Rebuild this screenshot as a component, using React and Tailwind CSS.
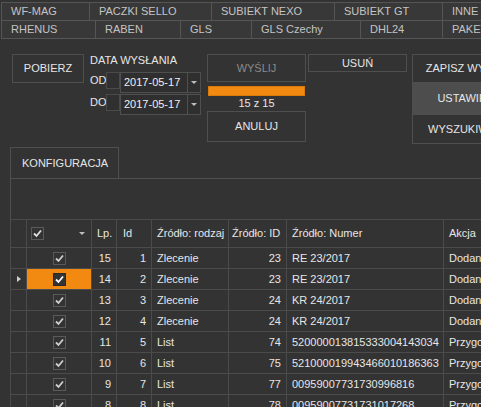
import React from "react";

const Check = ({ color = "#d0d0d0" }) => (
  <svg width="11" height="11" viewBox="0 0 11 11" className="block">
    <polyline points="2,5.5 4.5,8 9,2.5" fill="none" stroke={color} strokeWidth="1.8" />
  </svg>
);

const Box = ({ selected }) => (
  <div
    className={
      "w-[13px] h-[13px] border flex items-center justify-center " +
      (selected ? "border-[#2a2a2a] bg-[#333333]" : "border-[#5a5a5a] bg-transparent")
    }
  >
    <Check color={selected ? "#ffffff" : "#cfcfcf"} />
  </div>
);

const rows = [
  [15, 1, "Zlecenie", 23, "RE 23/2017", "Dodano"],
  [14, 2, "Zlecenie", 23, "RE 23/2017", "Dodano"],
  [13, 3, "Zlecenie", 24, "KR 24/2017", "Dodano"],
  [12, 4, "Zlecenie", 24, "KR 24/2017", "Dodano"],
  [11, 5, "List", 74, "520000013815333004143034", "Przygotowano"],
  [10, 6, "List", 75, "521000019943466010186363", "Przygotowano"],
  [9, 7, "List", 77, "00959007731730996816", "Przygotowano"],
  [8, 8, "List", 78, "00959007731731017268", "Przygotowano"],
];

const cols = "grid grid-cols-[16px_65px_25px_35px_77px_58px_157px_120px]";
const cell = "border-r border-b border-[#4b4b4b] overflow-hidden whitespace-nowrap flex items-center";

const Tab = ({ w, children, last }) => (
  <div
    className={
      "h-full flex items-center pl-[9px] whitespace-nowrap overflow-hidden text-[#c4c4c4] " +
      (last ? "" : "border-r border-[#555555]")
    }
    style={{ width: w, flex: "none" }}
  >
    {children}
  </div>
);

const Btn = ({ className = "", color = "text-[#e6e6e6]", children }) => (
  <div
    className={
      "border border-[#4f4f4f] flex items-center justify-center whitespace-nowrap overflow-hidden " +
      color +
      " " +
      className
    }
  >
    {children}
  </div>
);

const DateField = () => (
  <div className="w-[81px] h-[21px] border border-[#4f4f4f] bg-[#2f2f2f] flex items-center">
    <div className="flex-1 pl-[3px] text-[#f0f0f0]">2017-05-17</div>
    <div className="w-[13px] h-full border-l border-[#4f4f4f] flex items-center justify-center">
      <div className="w-0 h-0 border-l-[3px] border-r-[3px] border-t-[3px] border-l-transparent border-r-transparent border-t-[#bdbdbd]" />
    </div>
  </div>
);

export default function App() {
  return (
    <div
      className="w-[481px] h-[407px] overflow-hidden bg-[#333333] text-[11px] leading-[13px] text-[#e6e6e6]"
      style={{ fontFamily: '"Liberation Sans", Arial, sans-serif' }}
    >
      {/* top tabs */}
      <div className="pt-[2px] pl-[1px]">
        <div className="w-[600px] border-t border-l border-[#555555] bg-[#383838]">
          <div className="flex h-[18px] border-b border-[#555555]">
            <Tab w={88}>WF-MAG</Tab>
            <Tab w={122}>PACZKI SELLO</Tab>
            <Tab w={123}>SUBIEKT NEXO</Tab>
            <Tab w={108}>SUBIEKT GT</Tab>
            <Tab w={120} last>INNE ZEWNĘTRZNE</Tab>
          </div>
          <div className="flex h-[18px] border-b border-[#555555]">
            <Tab w={94}>RHENUS</Tab>
            <Tab w={85}>RABEN</Tab>
            <Tab w={71}>GLS</Tab>
            <Tab w={109}>GLS Czechy</Tab>
            <Tab w={82}>DHL24</Tab>
            <Tab w={120} last>PAKETTI</Tab>
          </div>
        </div>
      </div>

      {/* toolbar */}
      <div className="flex items-start mt-[15px] w-[600px]">
        <Btn className="ml-[12px] w-[72px] h-[29px]">POBIERZ</Btn>

        <div className="ml-[6px] w-[111px] flex flex-col -mt-[1px]">
          <div className="h-[14px] flex items-center">DATA WYSŁANIA</div>
          <div className="mt-[5px] flex items-start">
            <div className="w-[16px] h-[17px] flex items-center">OD</div>
            <div className="w-[14px] h-[17px] border border-[#4a4a4a] bg-[#303030]" />
            <DateField />
          </div>
          <div className="mt-[1px] flex items-start">
            <div className="w-[16px] h-[17px] flex items-center">DO</div>
            <div className="w-[14px] h-[17px] border border-[#4a4a4a] bg-[#303030]" />
            <DateField />
          </div>
        </div>

        <div className="ml-[6px] w-[99px] flex flex-col">
          <Btn className="h-[28px]" color="text-[#8a8a8a]">WYŚLIJ</Btn>
          <div className="mt-[4px] mx-[1px] h-[10px] bg-[#f28a12] border border-[#d97a0a]" />
          <div className="h-[15px] flex items-center justify-center">15 z 15</div>
          <Btn className="h-[31px]">ANULUJ</Btn>
        </div>

        <Btn className="ml-[2px] w-[99px] h-[18px]">USUŃ</Btn>

        <div className="ml-[5px] w-[118px] flex flex-col">
          <Btn className="h-[29px]">ZAPISZ WYSYŁKI</Btn>
          <div className="h-[31px] bg-[#4d4d4d] flex items-center justify-center whitespace-nowrap">USTAWIENIA</div>
          <Btn className="h-[30px]">WYSZUKIWANIE</Btn>
        </div>
      </div>

      {/* konfiguracja tab */}
      <div className="mt-[3px] pl-[10px]">
        <div className="flex">
          <div className="w-[109px] h-[31px] border-t border-l border-r border-[#4f4f4f] flex items-center pl-[11px]">
            KONFIGURACJA
          </div>
        </div>
        <div className="border-t border-l border-[#4f4f4f] h-[41px]" />

        {/* grid */}
        <div className="border-l border-[#4b4b4b] w-[560px]">
          <div className={cols + " h-[29px] border-t border-[#4b4b4b]"}>
            <div className={cell} />
            <div className={cell + " justify-between pl-[4px] pr-[6px]"}>
              <div className="w-[13px] h-[13px] border border-[#5a5a5a] flex items-center justify-center">
                <Check color="#e0e0e0" />
              </div>
              <div className="w-0 h-0 border-l-[3px] border-r-[3px] border-t-[3px] border-l-transparent border-r-transparent border-t-[#bdbdbd]" />
            </div>
            <div className={cell + " pl-[5px]"}>Lp.</div>
            <div className={cell + " pl-[6px]"}>Id</div>
            <div className={cell + " pl-[5px]"}>Źródło: rodzaj</div>
            <div className={cell + " pl-[3px]"}>Źródło: ID</div>
            <div className={cell + " pl-[5px]"}>Źródło: Numer</div>
            <div className={cell + " pl-[5px]"}>Akcja</div>
          </div>
          {rows.map((r, i) => {
            const sel = i === 1;
            return (
              <div key={i} className={cols + " h-[21px]"}>
                <div className={cell + " justify-center pl-[1px]"}>
                  {sel && (
                    <div className="w-0 h-0 border-t-[3px] border-b-[3px] border-l-[4px] border-t-transparent border-b-transparent border-l-[#cfcfcf]" />
                  )}
                </div>
                <div className={cell + " justify-center " + (sel ? "bg-[#f28a12]" : "")}>
                  <Box selected={sel} />
                </div>
                <div className={cell + " justify-end pr-[5px]"}>{r[0]}</div>
                <div className={cell + " justify-end pr-[5px]"}>{r[1]}</div>
                <div className={cell + " pl-[5px]"}>{r[2]}</div>
                <div className={cell + " justify-end pr-[5px]"}>{r[3]}</div>
                <div className={cell + " pl-[5px]"}>{r[4]}</div>
                <div className={cell + " pl-[5px]"}>{r[5]}</div>
              </div>
            );
          })}
        </div>
      </div>
    </div>
  );
}
